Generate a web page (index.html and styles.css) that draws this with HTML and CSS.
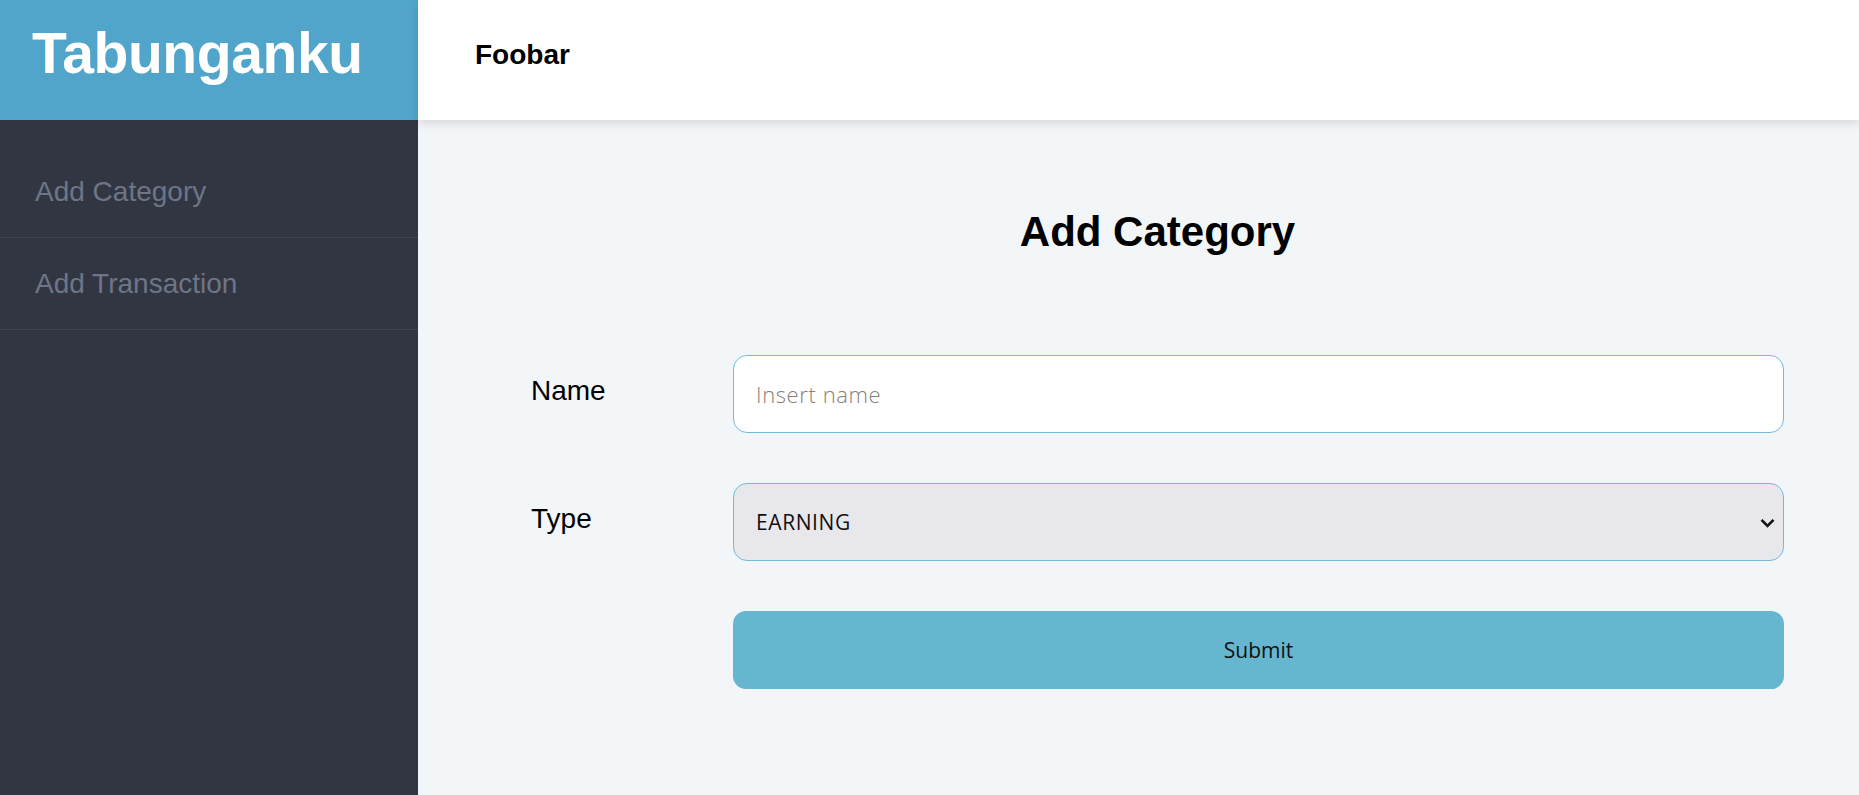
FILE: index.html
```html
<!DOCTYPE html>
<html lang="en">
<head>
<meta charset="utf-8">
<title>Tabunganku</title>
<link rel="stylesheet" href="styles.css">
</head>
<body>
<div class="app">
  <aside class="sidebar">
    <div class="brand">Tabunganku</div>
    <nav class="nav">
      <a class="nav-item" href="#">Add Category</a>
      <a class="nav-item" href="#">Add Transaction</a>
    </nav>
  </aside>
  <div class="content">
    <header class="topbar">
      <span class="user">Foobar</span>
    </header>
    <main class="main">
      <h1 class="title">Add Category</h1>
      <form class="form">
        <label class="label" for="name">Name</label>
        <input class="field" id="name" type="text" placeholder="Insert name">
        <label class="label" for="type">Type</label>
        <div class="select-wrap">
          <select class="field select" id="type">
            <option>EARNING</option>
            <option>SPENDING</option>
          </select>
          <svg class="chevron" width="15" height="10" viewBox="0 0 15 10"><path d="M1.5 1.8 L7.5 7.8 L13.5 1.8" fill="none" stroke="#111" stroke-width="2.6"/></svg>
        </div>
        <button class="submit" type="button">Submit</button>
      </form>
    </main>
  </div>
</div>
</body>
</html>
```
FILE: styles.css
```css
html, body {
  margin: 0;
  padding: 0;
}
body {
  font-family: "Liberation Sans", Arial, sans-serif;
  color: #000;
}
.app {
  display: grid;
  grid-template-columns: 418px 1fr;
  height: 100vh;
  overflow: hidden;
}
.sidebar {
  display: flex;
  flex-direction: column;
  background: #323643;
}
.brand {
  height: 120px;
  box-sizing: border-box;
  display: flex;
  align-items: center;
  padding: 0 0 14px 32px;
  background: #52a5ca;
  color: #fff;
  font-weight: bold;
  font-size: 57px;
  letter-spacing: -0.4px;
}
.nav {
  display: flex;
  flex-direction: column;
  padding-top: 26px;
}
.nav-item {
  display: block;
  padding: 30px 35px;
  line-height: 31px;
  font-size: 28px;
  color: #6e7586;
  text-decoration: none;
  border-bottom: 1px solid #3e4251;
}
.content {
  display: flex;
  flex-direction: column;
  min-width: 0;
}
.topbar {
  position: relative;
  z-index: 1;
  height: 120px;
  box-sizing: border-box;
  flex-shrink: 0;
  display: flex;
  align-items: center;
  padding: 0 0 10px 57px;
  background: #fff;
  box-shadow: 0 3px 10px rgba(0, 0, 0, 0.13);
}
.user {
  font-weight: bold;
  font-size: 28px;
}
.main {
  flex: 1;
  background: #f3f6f9;
  padding: 88px 75px 0 113px;
}
.title {
  margin: 0 0 99px;
  text-align: center;
  font-size: 42px;
  font-weight: bold;
  line-height: normal;
}
.form {
  display: grid;
  grid-template-columns: 202px 1fr;
  row-gap: 50px;
}
.label {
  align-self: start;
  margin-top: 20px;
  font-size: 28px;
  line-height: normal;
}
.field {
  display: block;
  width: 100%;
  height: 78px;
  box-sizing: border-box;
  margin: 0;
  padding: 0 22px;
  border: 1px solid #74bcd6;
  border-radius: 14px;
  background: #fff;
  font-family: "Open Sans", Lato, sans-serif;
  font-weight: 300;
  font-size: 22px;
  letter-spacing: 0.6px;
  color: #111;
  outline: none;
}
.field::placeholder {
  color: #857f7a;
}
.select-wrap {
  position: relative;
}
.select {
  appearance: none;
  -webkit-appearance: none;
  background: #e8e7ec;
  font-weight: 400;
  font-size: 21px;
  letter-spacing: 0.6px;
}
.chevron {
  position: absolute;
  right: 9px;
  top: 35px;
  pointer-events: none;
}
.submit {
  grid-column: 2;
  height: 78px;
  border: none;
  border-radius: 13px;
  background: #67b6d0;
  font-family: "Open Sans", Lato, sans-serif;
  font-weight: 400;
  font-size: 21px;
  color: #111;
  cursor: pointer;
}
```
